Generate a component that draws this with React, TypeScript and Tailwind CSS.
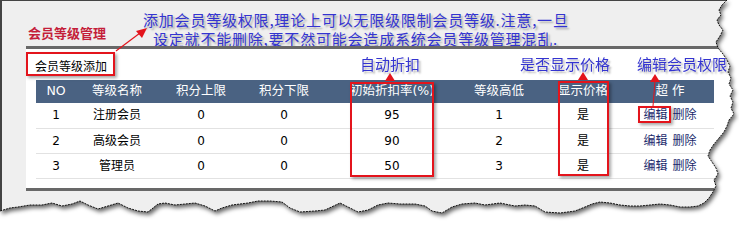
const edge: [number, number][] = [
  [727, 0], [722, 5], [719, 10], [721, 15], [717, 20], [719, 25], [723, 30], [720, 36], [716, 42],
  [718, 48], [723, 54], [727, 60], [730, 66], [728, 72], [731, 78], [729, 84], [733, 90], [730, 96],
  [733, 102], [731, 108], [734, 114], [729, 120], [727, 126], [724, 132], [719, 138], [714, 144],
  [710, 150], [708, 156], [712, 162], [716, 168], [718, 174], [714, 180], [716, 186], [713, 192],
  [709, 198], [704, 203], [698, 206], [690, 207], [680, 207], [670, 205], [660, 204], [650, 205],
  [640, 206], [630, 206], [620, 205], [610, 203], [600, 202], [592, 204], [585, 207], [575, 211],
  [560, 213], [545, 212], [535, 206], [525, 205], [515, 206], [500, 203], [485, 205], [475, 203],
  [462, 204], [452, 207], [442, 213], [432, 211], [425, 206], [415, 204], [400, 204], [388, 203],
  [378, 205], [368, 210], [358, 212], [350, 208], [340, 203], [325, 210], [315, 211], [300, 212],
  [290, 208], [282, 202], [270, 201], [258, 201], [248, 203], [240, 204], [232, 205], [222, 208],
  [215, 211], [205, 206], [195, 203], [185, 204], [175, 205], [165, 203], [158, 204], [148, 212],
  [138, 211], [128, 208], [118, 203], [108, 206], [98, 209], [88, 205], [80, 201], [72, 204],
  [62, 206], [52, 203], [42, 205], [30, 205], [18, 207], [10, 208], [0, 211]
]

const tornPath = `M0,0 L${edge.map(([x, y]) => `${x},${y}`).join(' L')} Z`
const edgeLine = edge.map(([x, y]) => `${x},${y}`).join(' ')

const rows = [
  ['1', '注册会员', '0', '0', '95', '1', '是'],
  ['2', '高级会员', '0', '0', '90', '2', '是'],
  ['3', '管理员', '0', '0', '50', '3', '是']
]

const App = () => {
  return (
    <div className="relative w-[739px] h-[252px] bg-white overflow-hidden font-['Noto_Sans_CJK_SC',sans-serif]">
      <svg width="0" height="0" className="absolute">
        <defs>
          <clipPath id="torn" clipPathUnits="userSpaceOnUse">
            <path d={tornPath} />
          </clipPath>
        </defs>
      </svg>

      <div className="[filter:drop-shadow(2px_3px_2px_rgba(0,0,0,0.6))]">
        <div className="w-[736px] h-[216px] bg-[#efefef] border-l-2 border-t border-[#444] [clip-path:url(#torn)]">
          {/* annotation strip */}
          <div className="flex h-[45px]">
            <div className="w-[141px] pl-[26px] pt-[24px] text-[13px] leading-[16px] font-bold text-[#c41e3a]">
              会员等级管理
            </div>
            <div className="pt-[9px] text-[15px] leading-[19px] tracking-[0.8px] text-[#3434d0] [text-shadow:2px_2px_2px_rgba(0,0,0,0.3)] whitespace-nowrap">
              <p className="h-[19px]">添加会员等级权限,理论上可以无限级限制会员等级.注意,一旦</p>
              <p className="h-[19px] pl-[10px]">设定就不能删除,要不然可能会造成系统会员等级管理混乱.</p>
            </div>
          </div>

          {/* white panel */}
          <div className="relative ml-[24px] w-[710px] bg-white border-y-[3px] border-[#686868] pb-[9px]">
            <div className="h-[31px] pt-[3px]">
              <div className="inline-block w-[89px] h-[24px] border-2 border-[#e3141c] pl-[7px] pt-[5px] text-[12px] leading-[14px] text-black shadow-[2px_2px_3px_rgba(0,0,0,0.35)]">
                会员等级添加
              </div>
            </div>

            <table className="ml-[10px] w-[678px] table-fixed border-collapse text-[12px] font-['DejaVu_Sans','Noto_Sans_CJK_SC',sans-serif]">
              <colgroup>
                <col className="w-[40px]" />
                <col className="w-[82px]" />
                <col className="w-[86px]" />
                <col className="w-[80px]" />
                <col className="w-[136px]" />
                <col className="w-[78px]" />
                <col className="w-[90px]" />
                <col className="w-[86px]" />
              </colgroup>
              <thead>
                <tr className="h-[23px] bg-[#4a6282] text-white text-[12.5px]">
                  <th className="p-0 font-normal">NO</th>
                  <th className="p-0 font-normal">等级名称</th>
                  <th className="p-0 font-normal">积分上限</th>
                  <th className="p-0 font-normal">积分下限</th>
                  <th className="p-0 font-normal">初始折扣率(%)</th>
                  <th className="p-0 font-normal">等级高低</th>
                  <th className="p-0 font-normal">显示价格</th>
                  <th className="p-0 pr-[2px] font-normal">超 作</th>
                </tr>
              </thead>
              <tbody>
                {rows.map((r) => (
                  <tr key={r[0]} className="h-[25px] border-b border-[#e2e2e2] text-black text-center">
                    {r.map((c, i) => (
                      <td key={i} className="p-0">{c}</td>
                    ))}
                    <td className="p-0 pr-[2px] text-[#1a2a6c]">
                      编辑<span className="ml-[5px]">删除</span>
                    </td>
                  </tr>
                ))}
              </tbody>
            </table>

            {/* callouts */}
            <div className="absolute left-[334px] top-[6px] text-[15px] leading-[18px] text-[#3434d0] [text-shadow:2px_2px_2px_rgba(0,0,0,0.3)]">自动折扣</div>
            <div className="absolute left-[494px] top-[6px] text-[15px] leading-[18px] text-[#3434d0] [text-shadow:2px_2px_2px_rgba(0,0,0,0.3)]">是否显示价格</div>
            <div className="absolute left-[611px] top-[6px] text-[15px] leading-[18px] text-[#3434d0] [text-shadow:2px_2px_2px_rgba(0,0,0,0.3)] whitespace-nowrap">编辑会员权限</div>

            <div className="absolute left-[324px] top-[33px] w-[84px] h-[95px] border-2 border-[#e3141c] shadow-[2px_2px_3px_rgba(0,0,0,0.35)]" />
            <div className="absolute left-[532px] top-[32px] w-[51px] h-[95px] border-2 border-[#e3141c] shadow-[2px_2px_3px_rgba(0,0,0,0.35)]" />
            <div className="absolute left-[612px] top-[57px] w-[33px] h-[17px] border-2 border-[#e3141c] shadow-[2px_2px_3px_rgba(0,0,0,0.35)]" />
          </div>
        </div>
      </div>

      {/* torn edge dotted line and red arrows */}
      <svg className="absolute left-0 top-0 pointer-events-none" width="739" height="252">
        <polyline points={edgeLine} fill="none" stroke="#111" strokeWidth="1" strokeDasharray="2 1" />
        <g fill="#e3141c" stroke="#e3141c">
          <line x1="116" y1="51" x2="140" y2="33" strokeWidth="1.2" />
          <polygon points="147,28 136,31 142,38" strokeWidth="0" />
          <polygon points="390,73 385,81 395,81" strokeWidth="0" />
          <polygon points="583,72 578,80 588,80" strokeWidth="0" />
          <polygon points="655,74 650,82 660,82" strokeWidth="0" />
          <line x1="655" y1="81" x2="653" y2="106" strokeWidth="1" />
        </g>
      </svg>
    </div>
  )
}

export default App
